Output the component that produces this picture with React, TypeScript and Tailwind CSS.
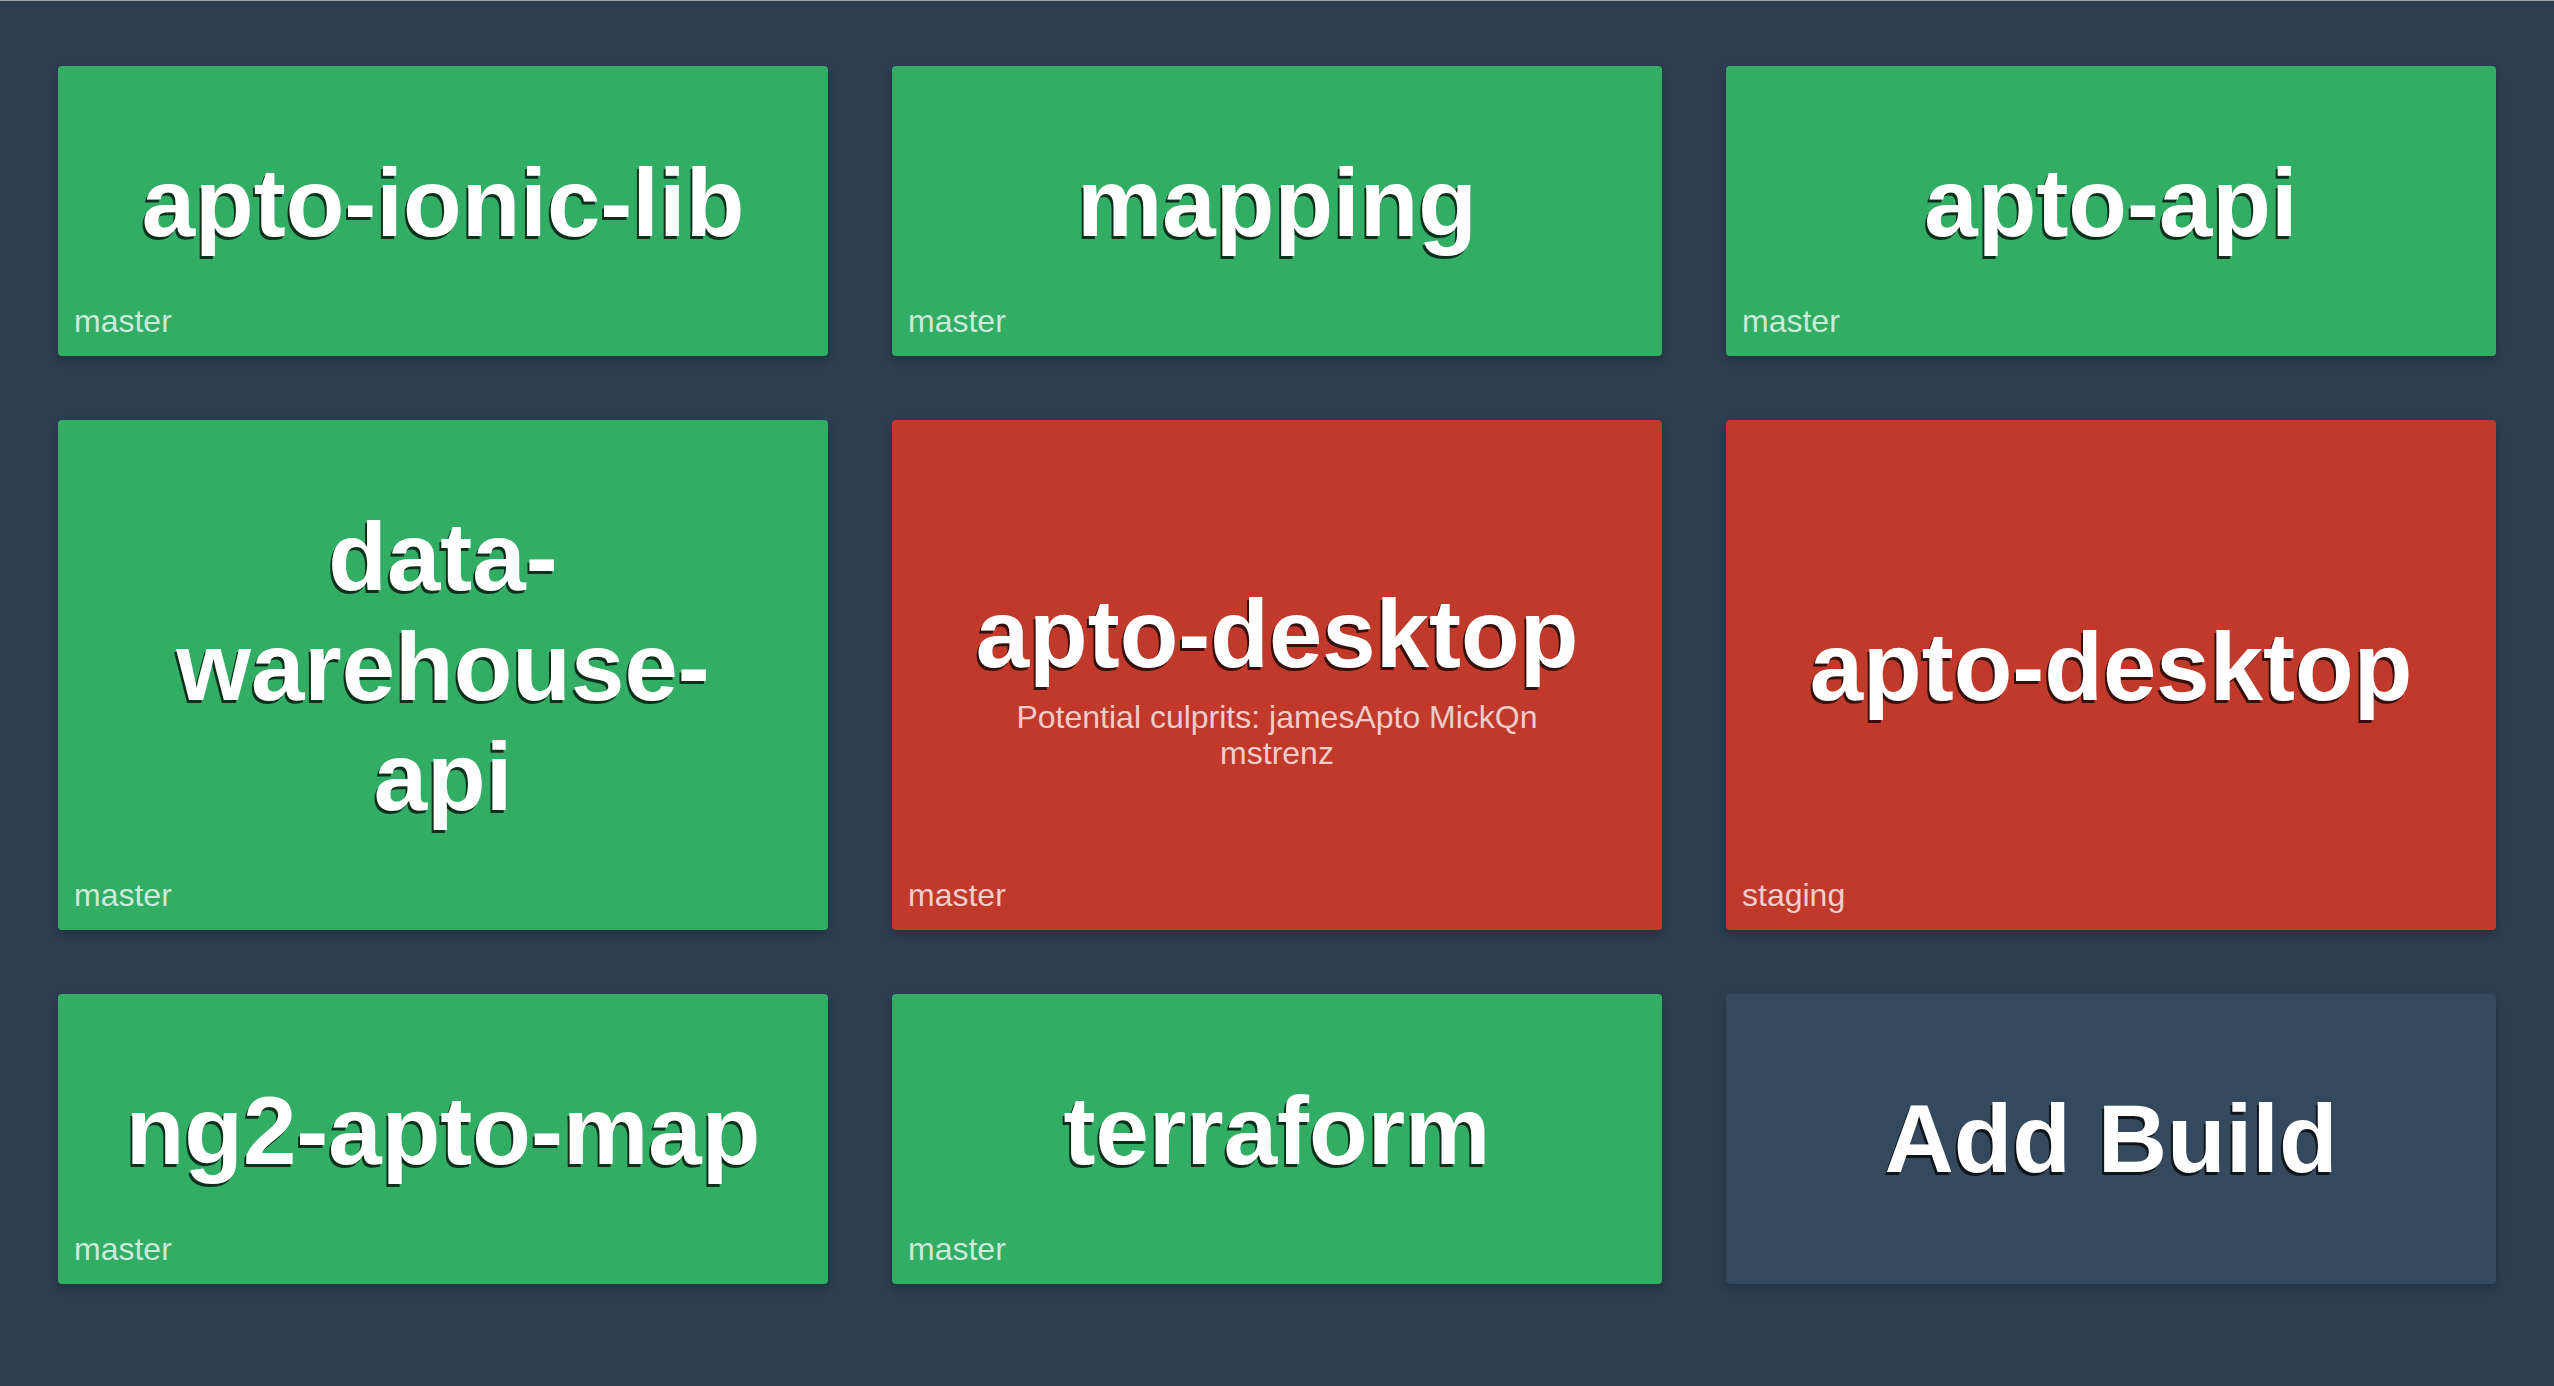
const FONT = "font-['Liberation_Sans',Arial,Helvetica,sans-serif]";

type Build = {
  name: string;
  branch: string;
  status: "success" | "failure";
  culprits?: string[];
};

const BUILDS: Build[] = [
  { name: "apto-ionic-lib", branch: "master", status: "success" },
  { name: "mapping", branch: "master", status: "success" },
  { name: "apto-api", branch: "master", status: "success" },
  { name: "data-warehouse-api", branch: "master", status: "success" },
  {
    name: "apto-desktop",
    branch: "master",
    status: "failure",
    culprits: ["jamesApto", "MickQn", "mstrenz"],
  },
  { name: "apto-desktop", branch: "staging", status: "failure" },
  { name: "ng2-apto-map", branch: "master", status: "success" },
  { name: "terraform", branch: "master", status: "success" },
];

const STATUS_BG: Record<Build["status"], string> = {
  success: "bg-[#31ad64]",
  failure: "bg-[#c0392b]",
};

function BuildCard({ build }: { build: Build }) {
  return (
    <div
      className={`relative flex flex-col items-center justify-center rounded-[4px] px-[57px] py-[82px] text-center shadow-[0_4px_8px_rgba(0,0,0,0.22)] ${STATUS_BG[build.status]}`}
    >
      <h1 className="text-[96px] font-bold leading-[normal] text-white [text-shadow:-2px_3px_0_rgba(0,0,0,0.72)]">
        {build.name}
      </h1>
      {/* spacer keeps the title a touch above center, like the original */}
      <div className="mt-[10px] min-h-[6px] max-w-[600px] text-[32px] leading-[36px] text-white/75">
        {build.culprits ? `Potential culprits: ${build.culprits.join(" ")}` : null}
      </div>
      <span className="absolute bottom-4 left-4 text-[32px] leading-[normal] text-white/75">
        {build.branch}
      </span>
    </div>
  );
}

function AddBuildCard() {
  return (
    <button
      type="button"
      className="flex items-center justify-center rounded-[4px] bg-[#34495e] px-[57px] py-[82px] text-center shadow-[0_4px_8px_rgba(0,0,0,0.22)]"
    >
      <span className="text-[96px] font-bold leading-[normal] text-white [text-shadow:-2px_3px_0_rgba(0,0,0,0.72)]">
        Add Build
      </span>
    </button>
  );
}

export default function App() {
  return (
    <div className={`min-h-screen border-t border-[#9ea3a8] bg-[#2c3e50] px-[58px] pb-[100px] pt-[65px] ${FONT}`}>
      <div className="grid grid-cols-3 gap-[64px]">
        {BUILDS.map((build, i) => (
          <BuildCard key={`${build.name}-${build.branch}-${i}`} build={build} />
        ))}
        <AddBuildCard />
      </div>
    </div>
  );
}
